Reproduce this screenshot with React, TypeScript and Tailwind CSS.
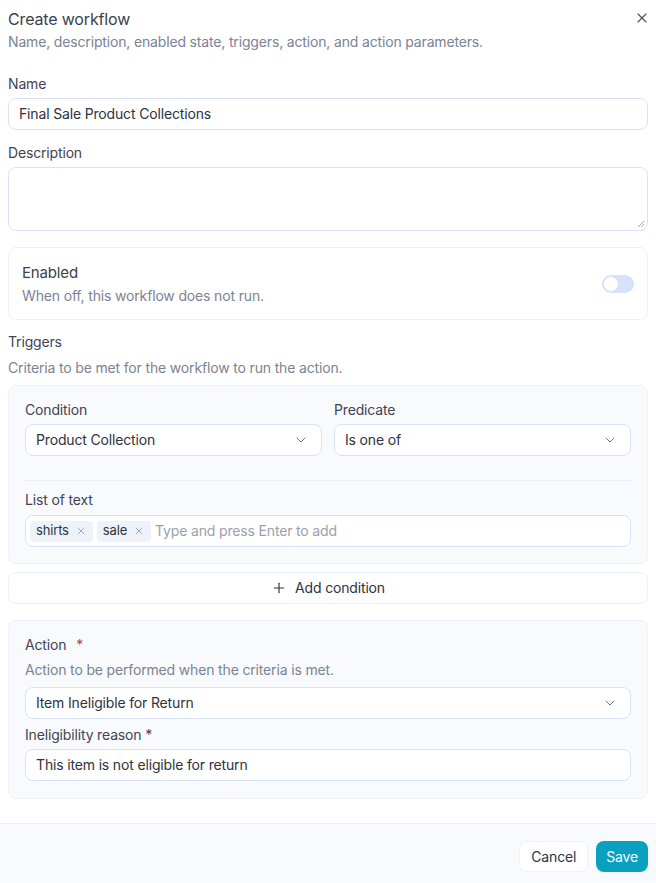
import { ChevronDown, Plus, X } from "lucide-react";

const font = { fontFamily: "Inter, 'Noto Sans', sans-serif" };

const Label = ({ children }: { children: React.ReactNode }) => (
  <div className="text-sm text-[#3f4451] leading-5">{children}</div>
);

const Select = ({ value }: { value: string }) => (
  <div className="flex h-8 items-center justify-between rounded-lg border border-[#d9e3f7] bg-white pl-[10px] pr-3">
    <span className="text-sm text-[#2e3340]">{value}</span>
    <ChevronDown className="h-4 w-4 text-[#6b7280]" strokeWidth={1.5} />
  </div>
);

const Chip = ({ label }: { label: string }) => (
  <span className="flex h-[21px] items-center gap-1.5 rounded bg-[#eef2fb] px-[6px] text-[13px] text-[#2e3340]">
    {label}
    <X className="h-3 w-3 text-[#8b92a0]" strokeWidth={1.5} />
  </span>
);

export default function App() {
  return (
    <div style={font} className="flex min-h-[883px] w-[656px] flex-col bg-white tracking-[-0.01em]">
      <div className="flex flex-col px-2 pt-[9px]">
        <div className="flex items-start justify-between">
          <h2 className="text-base leading-5 text-[#3a3f4b]">Create workflow</h2>
          <X className="-mr-0.5 mt-px h-4 w-4 text-[#4b5160]" strokeWidth={1.75} />
        </div>
        <p className="mt-[3px] text-sm leading-5 text-[#7b8394]">
          Name, description, enabled state, triggers, action, and action parameters.
        </p>

        <div className="mt-[22px]">
          <Label>Name</Label>
          <div className="mt-1 flex h-8 items-center rounded-lg border border-[#d9e3f7] px-[10px] text-sm text-[#2e3340]">
            Final Sale Product Collections
          </div>
        </div>

        <div className="mt-[13px]">
          <Label>Description</Label>
          <div className="relative mt-1 h-16 rounded-lg border border-[#d9e3f7]">
            <svg className="absolute bottom-[2px] right-[2px] h-2 w-2 text-[#8b92a0]" viewBox="0 0 8 8">
              <path d="M7 1 1 7M7 4 4 7" stroke="currentColor" strokeWidth="0.8" />
            </svg>
          </div>
        </div>

        <div className="mt-4 flex items-center justify-between rounded-lg border border-[#eef1f7] px-[13px] py-[13px]">
          <div>
            <div className="text-[15px] leading-6 text-[#3a3f4b]">Enabled</div>
            <div className="mt-[1px] text-sm leading-5 text-[#7b8394]">
              When off, this workflow does not run.
            </div>
          </div>
          <div className="flex h-[18px] w-8 items-center rounded-full bg-[#d6e1fc] p-px">
            <div className="h-4 w-4 rounded-full border border-[#d6e1fc] bg-white" />
          </div>
        </div>

        <div className="mt-3">
          <Label>Triggers</Label>
          <p className="mt-1.5 text-sm leading-5 text-[#7b8394]">
            Criteria to be met for the workflow to run the action.
          </p>
        </div>

        <div className="mt-[7px] rounded-lg border border-[#eef1f7] bg-[#f8fafe] px-4 pb-4 pt-[14px]">
          <div className="grid grid-cols-2 gap-3">
            <div>
              <Label>Condition</Label>
              <div className="mt-1">
                <Select value="Product Collection" />
              </div>
            </div>
            <div>
              <Label>Predicate</Label>
              <div className="mt-1">
                <Select value="Is one of" />
              </div>
            </div>
          </div>
          <div className="mt-6 border-t border-[#e9edf5]" />
          <div className="mt-[9px]">
            <Label>List of text</Label>
            <div className="mt-[5px] flex h-8 items-center gap-1 rounded-lg border border-[#d9e3f7] bg-white px-1">
              <Chip label="shirts" />
              <Chip label="sale" />
              <span className="text-sm text-[#9aa1ad]">Type and press Enter to add</span>
            </div>
          </div>
        </div>

        <div className="mt-2 flex h-8 items-center justify-center gap-2 rounded-lg border border-[#eef1f7] bg-white text-sm text-[#2e3340]">
          <Plus className="h-4 w-4" strokeWidth={1.75} />
          Add condition
        </div>

        <div className="mt-4 rounded-lg border border-[#eef1f7] bg-[#f8fafe] px-4 pb-[17px] pt-[14px]">
          <div className="text-sm leading-5 text-[#3f4451]">
            Action <span className="ml-1.5 text-[#c2410c]">*</span>
          </div>
          <p className="mt-[5px] text-sm leading-5 text-[#7b8394]">
            Action to be performed when the criteria is met.
          </p>
          <div className="mt-[7px]">
            <Select value="Item Ineligible for Return" />
          </div>
          <div className="mt-[6px]">
            <Label>Ineligibility reason *</Label>
          </div>
          <div className="mt-1 flex h-8 items-center rounded-lg border border-[#d9e3f7] bg-white px-[10px] text-sm text-[#2e3340]">
            This item is not eligible for return
          </div>
        </div>
      </div>

      <div className="mt-6 flex flex-1 items-center justify-end gap-2 border-t border-[#eef1f7] bg-[#f8fafe] px-2 pb-[12px] pt-[17px]">
        <button className="h-[31px] rounded-lg border border-[#f0f2f7] bg-white px-[11px] text-sm text-[#2e3340]">
          Cancel
        </button>
        <button className="h-[31px] rounded-lg bg-[#0aa0c0] px-[10px] text-sm text-white">
          Save
        </button>
      </div>
    </div>
  );
}
